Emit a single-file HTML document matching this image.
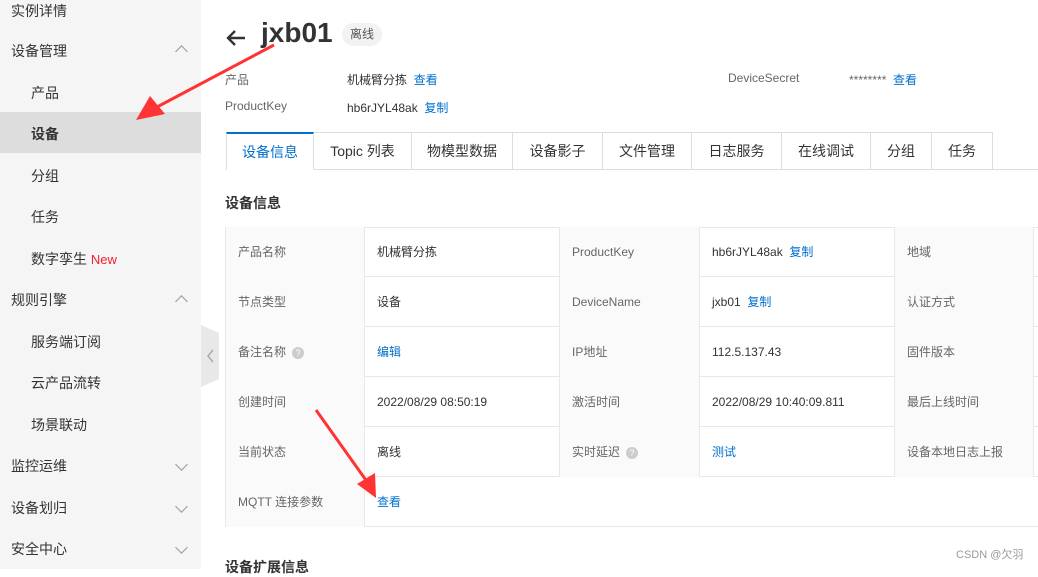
<!DOCTYPE html>
<html><head><meta charset="utf-8"><style>
*{margin:0;padding:0;box-sizing:border-box}
body{width:1038px;height:569px;overflow:hidden;background:#fff;font-family:"Liberation Sans","Noto Sans CJK SC",sans-serif;color:#333;position:relative}
.abs{position:absolute;white-space:nowrap}
#side{position:absolute;left:0;top:0;width:201px;height:569px;background:#f5f5f5}
.si{position:absolute;font-size:14px;color:#333}
.chev{position:absolute;left:177px;width:9px;height:9px;border-left:1.5px solid #999;border-top:1.5px solid #999}
.up{transform:rotate(45deg)}
.down{transform:rotate(225deg)}
.lab{color:#666;font-size:12px}
.val{font-size:12px;color:#333}
.lnk{color:#0070cc}
.tab{position:absolute;top:132px;height:38px;border:1px solid #ddd;border-left:none;font-size:14px;color:#333;text-align:center;line-height:37px;background:#fff}
.tbl{position:absolute;left:225px;top:227px;width:813px}
.row{position:absolute;left:0;height:50px;width:813px;border-bottom:1px solid #e8e8e8}
.c{position:absolute;top:0;height:50px;line-height:50px;font-size:12px;padding-left:12px;border-right:1px solid #e8e8e8;white-space:nowrap}
.l{background:#fafafa;color:#666}
.q{display:inline-block;width:12px;height:12px;border-radius:50%;background:#ccc;color:#fff;font-size:9px;line-height:12px;text-align:center;vertical-align:middle;margin-left:6px}
</style></head><body>
<div id="side">
<div class="si" style="left:11px;top:1px">实例详情</div>
<div class="si" style="left:11px;top:41px">设备管理</div><div class="chev up" style="top:47px"></div>
<div class="si" style="left:31px;top:83px">产品</div>
<div style="position:absolute;left:0;top:112px;width:201px;height:41px;background:#ddd"></div>
<div class="si" style="left:31px;top:124px;font-weight:bold">设备</div>
<div class="si" style="left:31px;top:166px">分组</div>
<div class="si" style="left:31px;top:207px">任务</div>
<div class="si" style="left:31px;top:249px">数字孪生 <span style="color:#f5222d;font-size:13px">New</span></div>
<div class="si" style="left:11px;top:290px">规则引擎</div><div class="chev up" style="top:297px"></div>
<div class="si" style="left:31px;top:332px">服务端订阅</div>
<div class="si" style="left:31px;top:373px">云产品流转</div>
<div class="si" style="left:31px;top:415px">场景联动</div>
<div class="si" style="left:11px;top:456px">监控运维</div><div class="chev down" style="top:460px"></div>
<div class="si" style="left:11px;top:498px">设备划归</div><div class="chev down" style="top:502px"></div>
<div class="si" style="left:11px;top:539px">安全中心</div><div class="chev down" style="top:543px"></div>
</div>
<svg class="abs" style="left:201px;top:325px" width="19" height="62"><path d="M0 0 L18 8 L18 54 L0 62Z" fill="#e8e8e8"/><path d="M12 25 L7 31 L12 37" stroke="#aaa" stroke-width="1.5" fill="none"/></svg>

<svg class="abs" style="left:224px;top:27px" width="24" height="22"><path d="M21 11 H4 M11 4 L4 11 L11 18" stroke="#333" stroke-width="2.4" fill="none"/></svg>
<div class="abs" style="left:261px;top:17px;font-size:28px;font-weight:bold;color:#333">jxb01</div>
<div class="abs" style="left:342px;top:23px;height:23px;padding:0 8px;border-radius:12px;background:#f2f2f2;font-size:12px;line-height:23px;color:#555">离线</div>
<div class="abs lab" style="left:225px;top:71px">产品</div>
<div class="abs val" style="left:347px;top:71px">机械臂分拣 <span class="lnk">&nbsp;查看</span></div>
<div class="abs lab" style="left:225px;top:99px">ProductKey</div>
<div class="abs val" style="left:347px;top:99px">hb6rJYL48ak <span class="lnk">&nbsp;复制</span></div>
<div class="abs lab" style="left:728px;top:71px">DeviceSecret</div>
<div class="abs val" style="left:849px;top:71px;color:#666">******** <span class="lnk">&nbsp;查看</span></div>

<div class="abs" style="left:225px;top:169px;width:813px;border-top:1px solid #ddd"></div>
<div class="tab" style="left:226px;width:88px;border-left:1px solid #ddd;border-top:2px solid #0070cc;border-bottom-color:#fff;color:#0070cc;line-height:36px">设备信息</div>
<div class="tab" style="left:314px;width:98px">Topic 列表</div>
<div class="tab" style="left:412px;width:101px">物模型数据</div>
<div class="tab" style="left:513px;width:90px">设备影子</div>
<div class="tab" style="left:603px;width:89px">文件管理</div>
<div class="tab" style="left:692px;width:90px">日志服务</div>
<div class="tab" style="left:782px;width:89px">在线调试</div>
<div class="tab" style="left:871px;width:61px">分组</div>
<div class="tab" style="left:932px;width:61px">任务</div>

<div class="abs" style="left:225px;top:193px;font-size:14px;font-weight:bold;color:#333">设备信息</div>

<div class="tbl">
<div style="position:absolute;left:0;top:0;width:813px;border-top:1px solid #e8e8e8"></div>
<div class="row" style="top:0"><div class="c l" style="left:0;width:140px;border-left:1px solid #e8e8e8">产品名称</div><div class="c" style="left:140px;width:195px">机械臂分拣</div><div class="c l" style="left:335px;width:140px">ProductKey</div><div class="c" style="left:475px;width:195px">hb6rJYL48ak <span class="lnk">&nbsp;复制</span></div><div class="c l" style="left:670px;width:139px">地域</div></div>
<div class="row" style="top:50px"><div class="c l" style="left:0;width:140px;border-left:1px solid #e8e8e8">节点类型</div><div class="c" style="left:140px;width:195px">设备</div><div class="c l" style="left:335px;width:140px">DeviceName</div><div class="c" style="left:475px;width:195px">jxb01 <span class="lnk">&nbsp;复制</span></div><div class="c l" style="left:670px;width:139px">认证方式</div></div>
<div class="row" style="top:100px"><div class="c l" style="left:0;width:140px;border-left:1px solid #e8e8e8">备注名称<span class="q">?</span></div><div class="c lnk" style="left:140px;width:195px">编辑</div><div class="c l" style="left:335px;width:140px">IP地址</div><div class="c" style="left:475px;width:195px">112.5.137.43</div><div class="c l" style="left:670px;width:139px">固件版本</div></div>
<div class="row" style="top:150px"><div class="c l" style="left:0;width:140px;border-left:1px solid #e8e8e8">创建时间</div><div class="c" style="left:140px;width:195px">2022/08/29 08:50:19</div><div class="c l" style="left:335px;width:140px">激活时间</div><div class="c" style="left:475px;width:195px">2022/08/29 10:40:09.811</div><div class="c l" style="left:670px;width:139px">最后上线时间</div></div>
<div class="row" style="top:200px"><div class="c l" style="left:0;width:140px;border-left:1px solid #e8e8e8">当前状态</div><div class="c" style="left:140px;width:195px">离线</div><div class="c l" style="left:335px;width:140px">实时延迟<span class="q">?</span></div><div class="c lnk" style="left:475px;width:195px">测试</div><div class="c l" style="left:670px;width:139px">设备本地日志上报</div></div>
<div class="row" style="top:250px"><div class="c l" style="left:0;width:140px;border-left:1px solid #e8e8e8">MQTT 连接参数</div><div class="c lnk" style="left:140px;width:195px;border-right:none">查看</div></div>
</div>
<div class="abs" style="left:225px;top:557px;font-size:14px;font-weight:bold">设备扩展信息</div>
<div class="abs" style="left:956px;top:546px;font-size:11px;color:#999">CSDN @欠羽</div>

<svg class="abs" style="left:0;top:0" width="1038" height="569">
<path d="M274 45 L157 107" stroke="#f33" stroke-width="3"/><path d="M136 120 L150 96 L165 114Z" fill="#f33"/>
<path d="M316 410 L368 483" stroke="#f33" stroke-width="3"/><path d="M376 498 L357 484 L375 473Z" fill="#f33"/>
</svg>
</body></html>
